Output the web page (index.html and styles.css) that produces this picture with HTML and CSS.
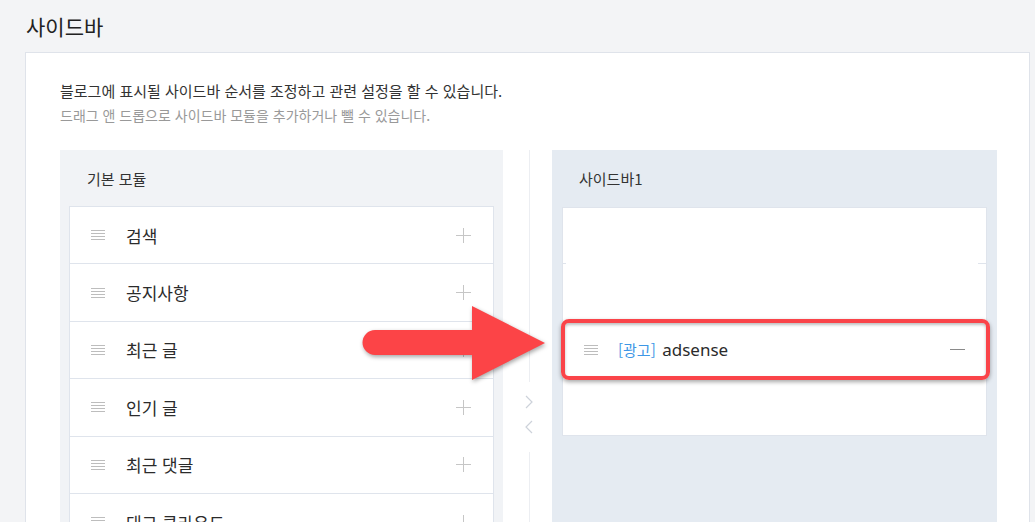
FILE: index.html
```html
<!DOCTYPE html>
<html lang="ko">
<head>
<meta charset="utf-8">
<title>사이드바</title>
<link rel="stylesheet" href="styles.css">
</head>
<body>
<h1 class="page-title">사이드바</h1>
<section class="card">
  <p class="desc">블로그에 표시될 사이드바 순서를 조정하고 관련 설정을 할 수 있습니다.</p>
  <p class="sub">드래그 앤 드롭으로 사이드바 모듈을 추가하거나 뺄 수 있습니다.</p>
  <div class="panels">
    <div class="panel panel-base">
      <div class="panel-head">기본 모듈</div>
      <ul class="list">
        <li class="row"><span class="handle"></span><span class="name">검색</span><span class="plus"></span></li>
        <li class="row"><span class="handle"></span><span class="name">공지사항</span><span class="plus"></span></li>
        <li class="row"><span class="handle"></span><span class="name">최근 글</span><span class="plus"></span></li>
        <li class="row"><span class="handle"></span><span class="name">인기 글</span><span class="plus"></span></li>
        <li class="row"><span class="handle"></span><span class="name">최근 댓글</span><span class="plus"></span></li>
        <li class="row"><span class="handle"></span><span class="name">태그 클라우드</span><span class="plus"></span></li>
      </ul>
    </div>
    <div class="divider">
      <span class="vline vline-top"></span>
      <span class="chev">
        <svg width="10" height="14" viewBox="0 0 10 14"><path d="M2 1 L8 7 L2 13" fill="none" stroke="#cdd2da" stroke-width="1.2"/></svg>
        <svg width="10" height="14" viewBox="0 0 10 14"><path d="M8 1 L2 7 L8 13" fill="none" stroke="#cdd2da" stroke-width="1.2"/></svg>
      </span>
      <span class="vline vline-bottom"></span>
    </div>
    <div class="panel panel-side">
      <div class="panel-head">사이드바1</div>
      <ul class="list list-side">
        <li class="slot slot-top"></li>
        <li class="slot"></li>
        <li class="row row-ad"><span class="handle"></span><span class="name"><span class="tag">[광고]</span> adsense</span><span class="minus"></span></li>
        <li class="slot"></li>
      </ul>
    </div>
  </div>
</section>
<svg class="arrow" width="1035" height="522" viewBox="0 0 1035 522">
  <path d="M375 330 H472 V306 L545 343 L472 380 V355 H375 A12.5 12.5 0 0 1 375 330 Z" fill="#fc4447"/>
</svg>
</body>
</html>
```
FILE: styles.css
```css
* { box-sizing: border-box; }
html, body { margin: 0; padding: 0; }
body {
  background: #f3f4f6;
  font-family: "Noto Sans CJK KR", "Noto Sans", sans-serif;
  color: #333;
  width: 1035px;
  height: 522px;
  overflow: hidden;
  position: relative;
}
.page-title {
  margin: 0;
  height: 52px;
  display: flex;
  align-items: center;
  padding-left: 26px;
  font-size: 21px;
  font-weight: 400;
  color: #222;
}
.card {
  margin-left: 25px;
  width: 1005px;
  background: #fff;
  border: 1px solid #dfe3ea;
  padding: 27px 32px 0 34px;
  height: 600px;
}
.desc {
  margin: 0;
  font-size: 15px;
  line-height: 22px;
  color: #333;
}
.sub {
  margin: 3px 0 0;
  font-size: 14px;
  line-height: 20px;
  color: #999;
}
.panels {
  display: flex;
  margin-top: 25px;
  height: 500px;
}
.panel { display: flex; flex-direction: column; }
.panel-base { width: 443px; background: #f1f3f6; }
.panel-side { width: 445px; background: #e5ebf2; }
.panel-head {
  height: 56px;
  display: flex;
  align-items: center;
  padding-left: 27px;
  font-size: 15px;
  color: #333;
}
.list {
  list-style: none;
  margin: 0 9px;
  padding: 0;
  background: #fff;
  border: 1px solid #dfe4ec;
  border-bottom: 0;
}
.row {
  height: 57.4px;
  display: flex;
  align-items: center;
  padding: 0 22px 0 21px;
  border-bottom: 1px solid #dfe4ec;
  font-size: 17px;
  color: #2b2b2b;
}
.handle {
  width: 14px;
  height: 10px;
  flex: none;
  background: repeating-linear-gradient(to bottom, #bdbdbd 0 1px, transparent 1px 3px);
}
.name { margin-left: 21px; flex: 1; }
.plus, .minus {
  width: 15px;
  height: 15px;
  flex: none;
  position: relative;
}
.plus::before, .plus::after, .minus::before {
  content: "";
  position: absolute;
  background: #c6c6c6;
}
.plus::before { left: 0; right: 0; top: 7px; height: 1px; }
.plus::after { top: 0; bottom: 0; left: 7px; width: 1px; }
.minus::before { left: 0; right: 0; top: 7px; height: 1px; background: #8a8a8a; }
.divider {
  width: 49px;
  display: flex;
  flex-direction: column;
  align-items: center;
  padding-left: 3px;
}
.vline { width: 1px; background: #eceef2; }
.vline-top { height: 232px; }
.vline-bottom { flex: 1; margin-top: 0; }
.chev {
  height: 70px;
  display: flex;
  flex-direction: column;
  align-items: center;
  justify-content: center;
  gap: 11px;
  padding-bottom: 6px;
}
.list-side {
  margin: 1px 10px 0;
  height: 229px;
  border-bottom: 1px solid #dfe4ec;
}
.slot { height: 57px; }
.slot-top {
  height: 56px;
  background:
    linear-gradient(#dfe4ec, #dfe4ec) left bottom / 3px 1px no-repeat,
    linear-gradient(#dfe4ec, #dfe4ec) right bottom / 8px 1px no-repeat;
}
.row-ad {
  position: relative;
  border-bottom: 0;
  padding: 0 21px 0 21px;
}
.row-ad::after {
  content: "";
  position: absolute;
  top: -2px;
  bottom: -2px;
  left: -2px;
  right: -4px;
  border: 4px solid #fa4449;
  border-radius: 8px;
  box-shadow: 0 2px 4px rgba(0,0,0,.35), inset 0 2px 3px rgba(0,0,0,.25);
}
.row-ad .name { margin-left: 20px; font-family: "Noto Sans", "Noto Sans CJK KR", sans-serif; }
.tag { color: #3d97e6; font-size: 15px; margin-right: 2px; font-family: "Noto Sans CJK KR", sans-serif; }
.arrow {
  position: absolute;
  left: 0;
  top: 0;
  pointer-events: none;
  filter: drop-shadow(1px 2px 2px rgba(0,0,0,.35));
}
```
